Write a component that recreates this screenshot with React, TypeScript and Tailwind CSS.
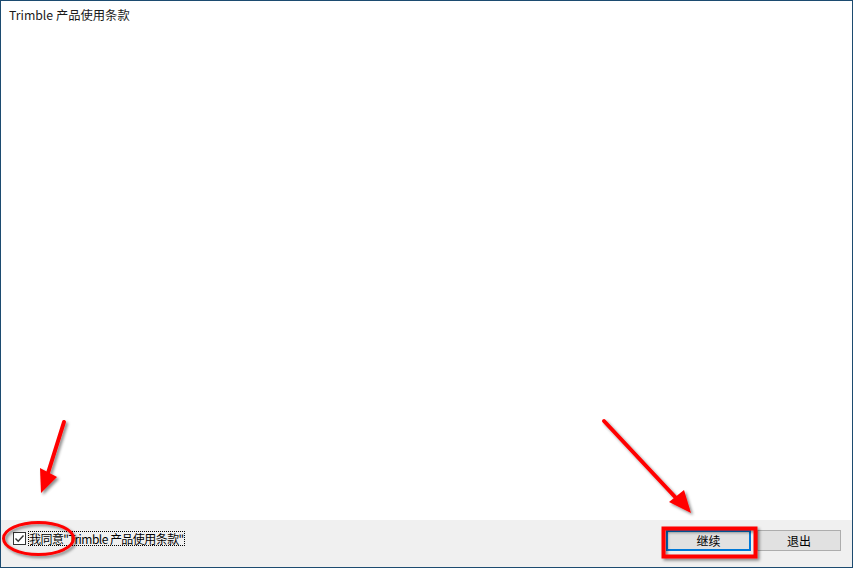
import React from "react";

const uiFont = {
  fontFamily: '"Noto Sans CJK SC", "Noto Sans", sans-serif',
};

function Annotations() {
  return (
    <svg
      className="pointer-events-none absolute left-0 top-0"
      width={853}
      height={568}
      viewBox="0 0 853 568"
    >
      <defs>
        <filter id="shadow" x="-20%" y="-20%" width="140%" height="140%">
          <feDropShadow dx="2" dy="2" stdDeviation="1.5" floodColor="#000" floodOpacity="0.45" />
        </filter>
      </defs>
      <g filter="url(#shadow)">
        {/* left arrow */}
        <line x1="63" y1="421" x2="47" y2="472" stroke="#ff0000" strokeWidth="4" strokeLinecap="round" />
        <polygon points="40,492 39,467 56,476" fill="#ff0000" />
        {/* right arrow */}
        <line x1="603" y1="420" x2="676" y2="498" stroke="#ff0000" strokeWidth="4" strokeLinecap="round" />
        <polygon points="690,512 668,501 683,489" fill="#ff0000" />
        {/* ellipse around checkbox */}
        <ellipse cx="37.5" cy="537.5" rx="35" ry="16" fill="none" stroke="#ff0000" strokeWidth="3" />
        {/* rectangle around continue button */}
        <rect x="662.5" y="527.5" width="92" height="28" fill="none" stroke="#ff0000" strokeWidth="4" />
      </g>
    </svg>
  );
}

export default function App() {
  return (
    <div
      className="relative flex h-[568px] w-[853px] flex-col overflow-hidden border border-[#1c4b70] bg-white text-black"
      style={uiFont}
    >
      <div className="flex-1 px-2 pt-[5px] text-[12.3px] leading-[18px] text-[#1a1a1a]">
        Trimble 产品使用条款
      </div>
      <div className="flex h-[47px] items-start justify-between bg-[#f0f0f0] pt-[10px]">
        <label className="ml-[12px] mt-px flex items-center">
          <span className="flex h-[13px] w-[13px] items-center justify-center border border-[#333333] bg-white">
            <svg width="11" height="11" viewBox="0 0 11 11">
              <path d="M1.5 5.5 L4.2 8.2 L9.5 2.5" fill="none" stroke="#333333" strokeWidth="1.4" />
            </svg>
          </span>
          <span className="ml-[2px] border border-dotted border-black text-[12px] leading-[13px] tracking-[-0.55px]">
            我同意"Trimble 产品使用条款"
          </span>
        </label>
        <div className="mr-[11px] flex gap-[6px]">
          <button className="h-[21px] w-[85px] border-2 border-[#0078d7] bg-[#e1e1e1] text-[12px] leading-none text-black">
            继续
          </button>
          <button className="h-[21px] w-[84px] border border-[#adadad] bg-[#e1e1e1] text-[12px] leading-none text-black">
            退出
          </button>
        </div>
      </div>
      <Annotations />
    </div>
  );
}
